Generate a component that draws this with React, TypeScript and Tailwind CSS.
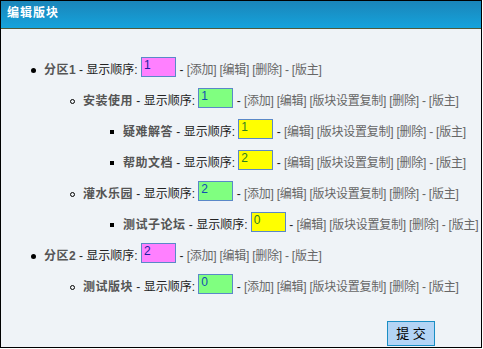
import React from 'react'

type Row = {
  level: 1 | 2 | 3
  name: string
  num?: string
  order: string
  color: 'pink' | 'green' | 'yellow'
  links: string
}

const rows: Row[] = [
  { level: 1, name: '分区', num: '1', order: '1', color: 'pink', links: '[添加] [编辑] [删除] - [版主]' },
  { level: 2, name: '安装使用', order: '1', color: 'green', links: '[添加] [编辑] [版块设置复制] [删除] - [版主]' },
  { level: 3, name: '疑难解答', order: '1', color: 'yellow', links: '[编辑] [版块设置复制] [删除] - [版主]' },
  { level: 3, name: '帮助文档', order: '2', color: 'yellow', links: '[编辑] [版块设置复制] [删除] - [版主]' },
  { level: 2, name: '灌水乐园', order: '2', color: 'green', links: '[添加] [编辑] [版块设置复制] [删除] - [版主]' },
  { level: 3, name: '测试子论坛', order: '0', color: 'yellow', links: '[编辑] [版块设置复制] [删除] - [版主]' },
  { level: 1, name: '分区', num: '2', order: '2', color: 'pink', links: '[添加] [编辑] [删除] - [版主]' },
  { level: 2, name: '测试版块', order: '0', color: 'green', links: '[添加] [编辑] [版块设置复制] [删除] - [版主]' },
]

const boxColor = {
  pink: 'bg-[#ff80ff] text-[#2020a0]',
  green: 'bg-[#80ff80] text-[#1050b0]',
  yellow: 'bg-[#ffff00] text-[#308020]',
}

const indent = { 1: 'pl-[30px]', 2: 'pl-[69px]', 3: 'pl-[109px]' }

function Bullet({ level }: { level: 1 | 2 | 3 }) {
  if (level === 1) return <span className="mt-[13px] mr-[8px] h-[5px] w-[5px] shrink-0 rounded-full bg-black" />
  if (level === 2) return <span className="mt-[13px] mr-[8px] h-[5px] w-[5px] shrink-0 rounded-full border border-black" />
  return <span className="mt-[13px] mr-[9px] h-[4px] w-[4px] shrink-0 bg-black" />
}

export default function App() {
  return (
    <div className="w-[482px] h-[348px] border border-black bg-[#eff3f7] flex flex-col font-['Liberation_Sans','Noto_Sans_CJK_SC',sans-serif] text-[12px]">
      <div className="h-[28px] shrink-0 border-b border-[#4f5a3a] bg-gradient-to-b from-[#1a85b9] to-[#14a3dc] px-[6px] pt-[4px] text-white font-bold tracking-[1px] leading-[16px]">
        编辑版块
      </div>
      <div className="pt-[26px] whitespace-nowrap">
        {rows.map((r, i) => (
          <div key={i} className={`flex items-start h-[31px] ${indent[r.level]}`}>
            <Bullet level={r.level} />
            <span className="mt-[7px] leading-[16px] font-bold text-[#555] tracking-[0.5px]">{r.name}</span>
            {r.num && <span className="mt-[7px] leading-[16px] font-bold text-[#555]">{r.num}</span>}
            <span className="mt-[7px] leading-[16px] text-[#222]">&nbsp;- 显示顺序:&nbsp;</span>
            <span className={`mt-[2px] h-[20px] w-[35px] shrink-0 border border-[#5a88c8] pl-[2px] leading-[15px] text-[12px] ${boxColor[r.color]}`}>
              {r.order}
            </span>
            <span className="mt-[7px] leading-[16px] text-[#222]">&nbsp;-&nbsp;</span>
            <span className="mt-[7px] leading-[16px] text-[#666] tracking-[-0.25px]">{r.links}</span>
          </div>
        ))}
      </div>
      <div className="flex justify-end pr-[46px] pt-[18px]">
        <button className="h-[25px] w-[48px] border border-[#1a8ec4] bg-[#b3d4f5] text-[13px] text-black leading-[20px]">
          提 交
        </button>
      </div>
    </div>
  )
}
